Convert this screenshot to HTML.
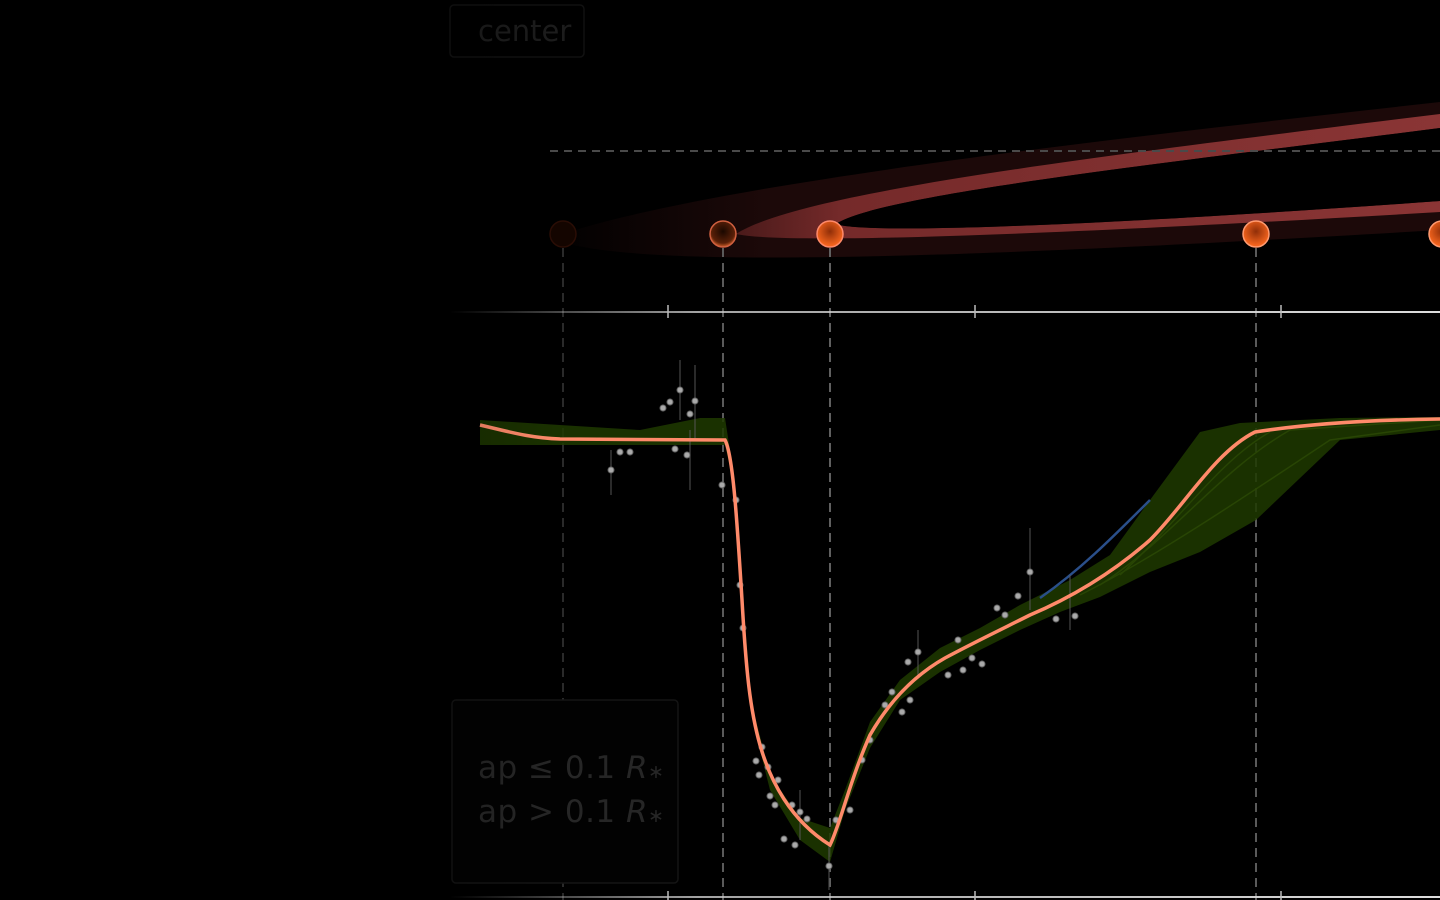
<!DOCTYPE html>
<html><head><meta charset="utf-8"><style>
html,body{margin:0;padding:0;background:#000;width:1440px;height:900px;overflow:hidden}
svg{display:block}
text{font-family:"DejaVu Sans","Liberation Sans",sans-serif}
</style></head><body>
<svg width="1440" height="900" viewBox="0 0 1440 900">
<defs>
<linearGradient id="fadeL" x1="0" x2="1" y1="0" y2="0">
<stop offset="0" stop-color="#000" stop-opacity="1"/>
<stop offset="1" stop-color="#000" stop-opacity="0"/>
</linearGradient>
<linearGradient id="darkband" x1="540" x2="1440" gradientUnits="userSpaceOnUse">
<stop offset="0" stop-color="#1a0808" stop-opacity="0"/>
<stop offset="0.25" stop-color="#1c0909"/>
<stop offset="1" stop-color="#1c0909"/>
</linearGradient>
<linearGradient id="brightband" x1="736" x2="1440" gradientUnits="userSpaceOnUse">
<stop offset="0" stop-color="#4a1a1a"/>
<stop offset="0.15" stop-color="#752a2a"/>
<stop offset="1" stop-color="#8a3535"/>
</linearGradient>
<linearGradient id="axis" x1="450" x2="1440" gradientUnits="userSpaceOnUse">
<stop offset="0" stop-color="#ccc" stop-opacity="0"/>
<stop offset="0.25" stop-color="#ccc" stop-opacity="0.8"/>
<stop offset="1" stop-color="#ddd"/>
</linearGradient>
<radialGradient id="ball" cx="0.5" cy="0.4" r="0.6">
<stop offset="0" stop-color="#1a0800"/>
<stop offset="0.75" stop-color="#5a2008"/>
<stop offset="1" stop-color="#d0602a"/>
</radialGradient>
<radialGradient id="ballB" cx="0.5" cy="0.4" r="0.6">
<stop offset="0" stop-color="#902e08"/>
<stop offset="1" stop-color="#ff6a20"/>
</radialGradient>
</defs>

<!-- title box -->
<rect x="450" y="5" width="134" height="52" rx="4" fill="none" stroke="#111" stroke-width="1.5"/>
<text x="478" y="41" font-size="29" fill="#1c1c1c">center</text>

<!-- dark band -->
<path d="M1440,102 C1100,140 700,185 550,238 C620,268 900,262 1440,230 Z" fill="url(#darkband)"/>
<!-- bright band with hole -->
<path fill-rule="evenodd" fill="url(#brightband)" d="M1440,114 C1100,156 800,192 736,234 C790,246 1100,232 1440,212 Z M1440,128 C1150,165 880,195 836,224 C870,236 1150,222 1440,201 Z"/>
<path d="M1440,128 C1150,165 880,195 836,224 C870,236 1150,222 1440,201 Z" fill="#000"/>

<!-- dashed horizontal -->
<line x1="550" y1="151" x2="1440" y2="151" stroke="#4a4a4a" stroke-width="2" stroke-dasharray="8,6"/>

<!-- vertical dashed -->
<g stroke-dasharray="9,6" stroke-width="2">
<line x1="563" y1="248" x2="563" y2="900" stroke="#2a2a2a"/>
<line x1="723" y1="248" x2="723" y2="900" stroke="#5a5a5a"/>
<line x1="830" y1="248" x2="830" y2="900" stroke="#606060"/>
<line x1="1256" y1="248" x2="1256" y2="900" stroke="#5a5a5a"/>
</g>

<!-- axes -->
<line x1="450" y1="312" x2="1440" y2="312" stroke="url(#axis)" stroke-width="2"/>
<line x1="450" y1="897" x2="1440" y2="897" stroke="url(#axis)" stroke-width="2"/>
<g stroke="#bbb" stroke-width="1.5">
<line x1="668" y1="305" x2="668" y2="318"/><line x1="975" y1="305" x2="975" y2="318"/><line x1="1281" y1="305" x2="1281" y2="318"/>
<line x1="668" y1="891" x2="668" y2="900"/><line x1="975" y1="891" x2="975" y2="900"/><line x1="1281" y1="891" x2="1281" y2="900"/>
</g>

<!-- balls -->
<circle cx="563" cy="234" r="13" fill="#140500" stroke="#2a0d05" stroke-width="1.5"/>
<circle cx="723" cy="234" r="13" fill="url(#ball)" stroke="#d06040" stroke-width="1.5"/>
<circle cx="830" cy="234" r="13" fill="url(#ballB)" stroke="#ff8a6a" stroke-width="1.5"/>
<circle cx="1256" cy="234" r="13" fill="url(#ballB)" stroke="#ff9a70" stroke-width="1.5"/>
<circle cx="1442" cy="234" r="13" fill="url(#ballB)" stroke="#ff9a70" stroke-width="1.5"/>

<!-- legend -->
<rect x="452" y="700" width="226" height="183" rx="4" fill="#020202" stroke="#141414" stroke-width="1.5"/>
<text x="478" y="778" font-size="31" fill="#262626" letter-spacing="0.5">ap  ≤  0.1 <tspan font-style="italic">R</tspan><tspan font-size="19">∗</tspan></text>
<text x="478" y="822" font-size="31" fill="#262626" letter-spacing="0.5">ap &gt; 0.1 <tspan font-style="italic">R</tspan><tspan font-size="19">∗</tspan></text>

<!-- green band -->
<path d="M480,420 L640,430 L700,418 L725,418 L733,470 L742,590 L752,705 L770,775 L800,818 L830,828 L845,790 L870,722 L900,680 L940,648 L980,628 L1020,605 L1070,580 L1110,555 L1150,500 L1200,432 L1240,423 L1340,418 L1440,417 L1440,430 L1340,440 L1256,520 L1200,552 L1150,572 L1100,597 L1060,612 L1020,630 L980,650 L940,672 L900,700 L870,748 L845,810 L830,862 L800,840 L770,790 L752,718 L742,610 L735,490 L725,445 L480,445 Z" fill="#1f3a00" opacity="0.85"/>
<g fill="none" stroke="#2c4a05" stroke-width="1.5" opacity="0.8">
<path d="M1100,585 C1170,540 1220,470 1290,430 L1440,420"/>
<path d="M1080,595 C1150,560 1240,500 1330,440 L1440,425"/>
<path d="M1120,575 C1180,520 1220,460 1270,432"/>
</g>
<path d="M1040,598 C1080,570 1110,540 1150,500" fill="none" stroke="#2a4f8a" stroke-width="2.5"/>

<!-- data points -->
<g stroke="#555" stroke-width="1">
<line x1="680" y1="360" x2="680" y2="420"/><line x1="695" y1="365" x2="695" y2="440"/><line x1="690" y1="430" x2="690" y2="490"/>
<line x1="611" y1="450" x2="611" y2="495"/><line x1="1030" y1="528" x2="1030" y2="610"/><line x1="918" y1="630" x2="918" y2="675"/>
<line x1="829" y1="845" x2="829" y2="890"/><line x1="800" y1="790" x2="800" y2="840"/><line x1="1070" y1="575" x2="1070" y2="630"/>
</g>
<g fill="#aaa" stroke="#666" stroke-width="1">
<circle cx="663" cy="408" r="3"/><circle cx="670" cy="402" r="3"/><circle cx="680" cy="390" r="3"/><circle cx="695" cy="401" r="3"/><circle cx="690" cy="414" r="3"/>
<circle cx="620" cy="452" r="3"/><circle cx="630" cy="452" r="3"/><circle cx="675" cy="449" r="3"/><circle cx="687" cy="455" r="3"/><circle cx="611" cy="470" r="3"/>
<circle cx="722" cy="485" r="3"/><circle cx="736" cy="500" r="3"/><circle cx="740" cy="585" r="3"/><circle cx="743" cy="628" r="3"/>
<circle cx="762" cy="747" r="3"/><circle cx="756" cy="761" r="3"/><circle cx="768" cy="767" r="3"/><circle cx="759" cy="775" r="3"/><circle cx="778" cy="780" r="3"/>
<circle cx="770" cy="796" r="3"/><circle cx="775" cy="805" r="3"/><circle cx="792" cy="805" r="3"/><circle cx="800" cy="812" r="3"/><circle cx="807" cy="819" r="3"/>
<circle cx="784" cy="839" r="3"/><circle cx="795" cy="845" r="3"/><circle cx="829" cy="866" r="3"/><circle cx="836" cy="820" r="3"/>
<circle cx="850" cy="810" r="3"/><circle cx="862" cy="760" r="3"/><circle cx="870" cy="740" r="3"/><circle cx="885" cy="705" r="3"/><circle cx="892" cy="692" r="3"/>
<circle cx="902" cy="712" r="3"/><circle cx="910" cy="700" r="3"/><circle cx="908" cy="662" r="3"/><circle cx="918" cy="652" r="3"/>
<circle cx="948" cy="675" r="3"/><circle cx="958" cy="640" r="3"/><circle cx="963" cy="670" r="3"/><circle cx="972" cy="658" r="3"/><circle cx="982" cy="664" r="3"/>
<circle cx="997" cy="608" r="3"/><circle cx="1005" cy="615" r="3"/><circle cx="1018" cy="596" r="3"/><circle cx="1030" cy="572" r="3"/>
<circle cx="1056" cy="619" r="3"/><circle cx="1075" cy="616" r="3"/>
</g>

<!-- model curve -->
<path d="M480,425 C510,432 530,438 560,439 L725,440 C733,455 737,520 742,600 C746,670 750,710 760,745 C770,780 790,820 830,845 C840,825 850,780 870,735 C890,700 915,675 945,658 C975,642 1000,630 1030,615 C1070,598 1110,575 1150,540 C1185,505 1215,452 1255,432 C1300,425 1360,420 1440,419" fill="none" stroke="#ff8a6a" stroke-width="3.5"/>

<!-- left fade -->
<rect x="0" y="0" width="560" height="900" fill="url(#fadeL)" opacity="0.75"/>
</svg>
</body></html>
